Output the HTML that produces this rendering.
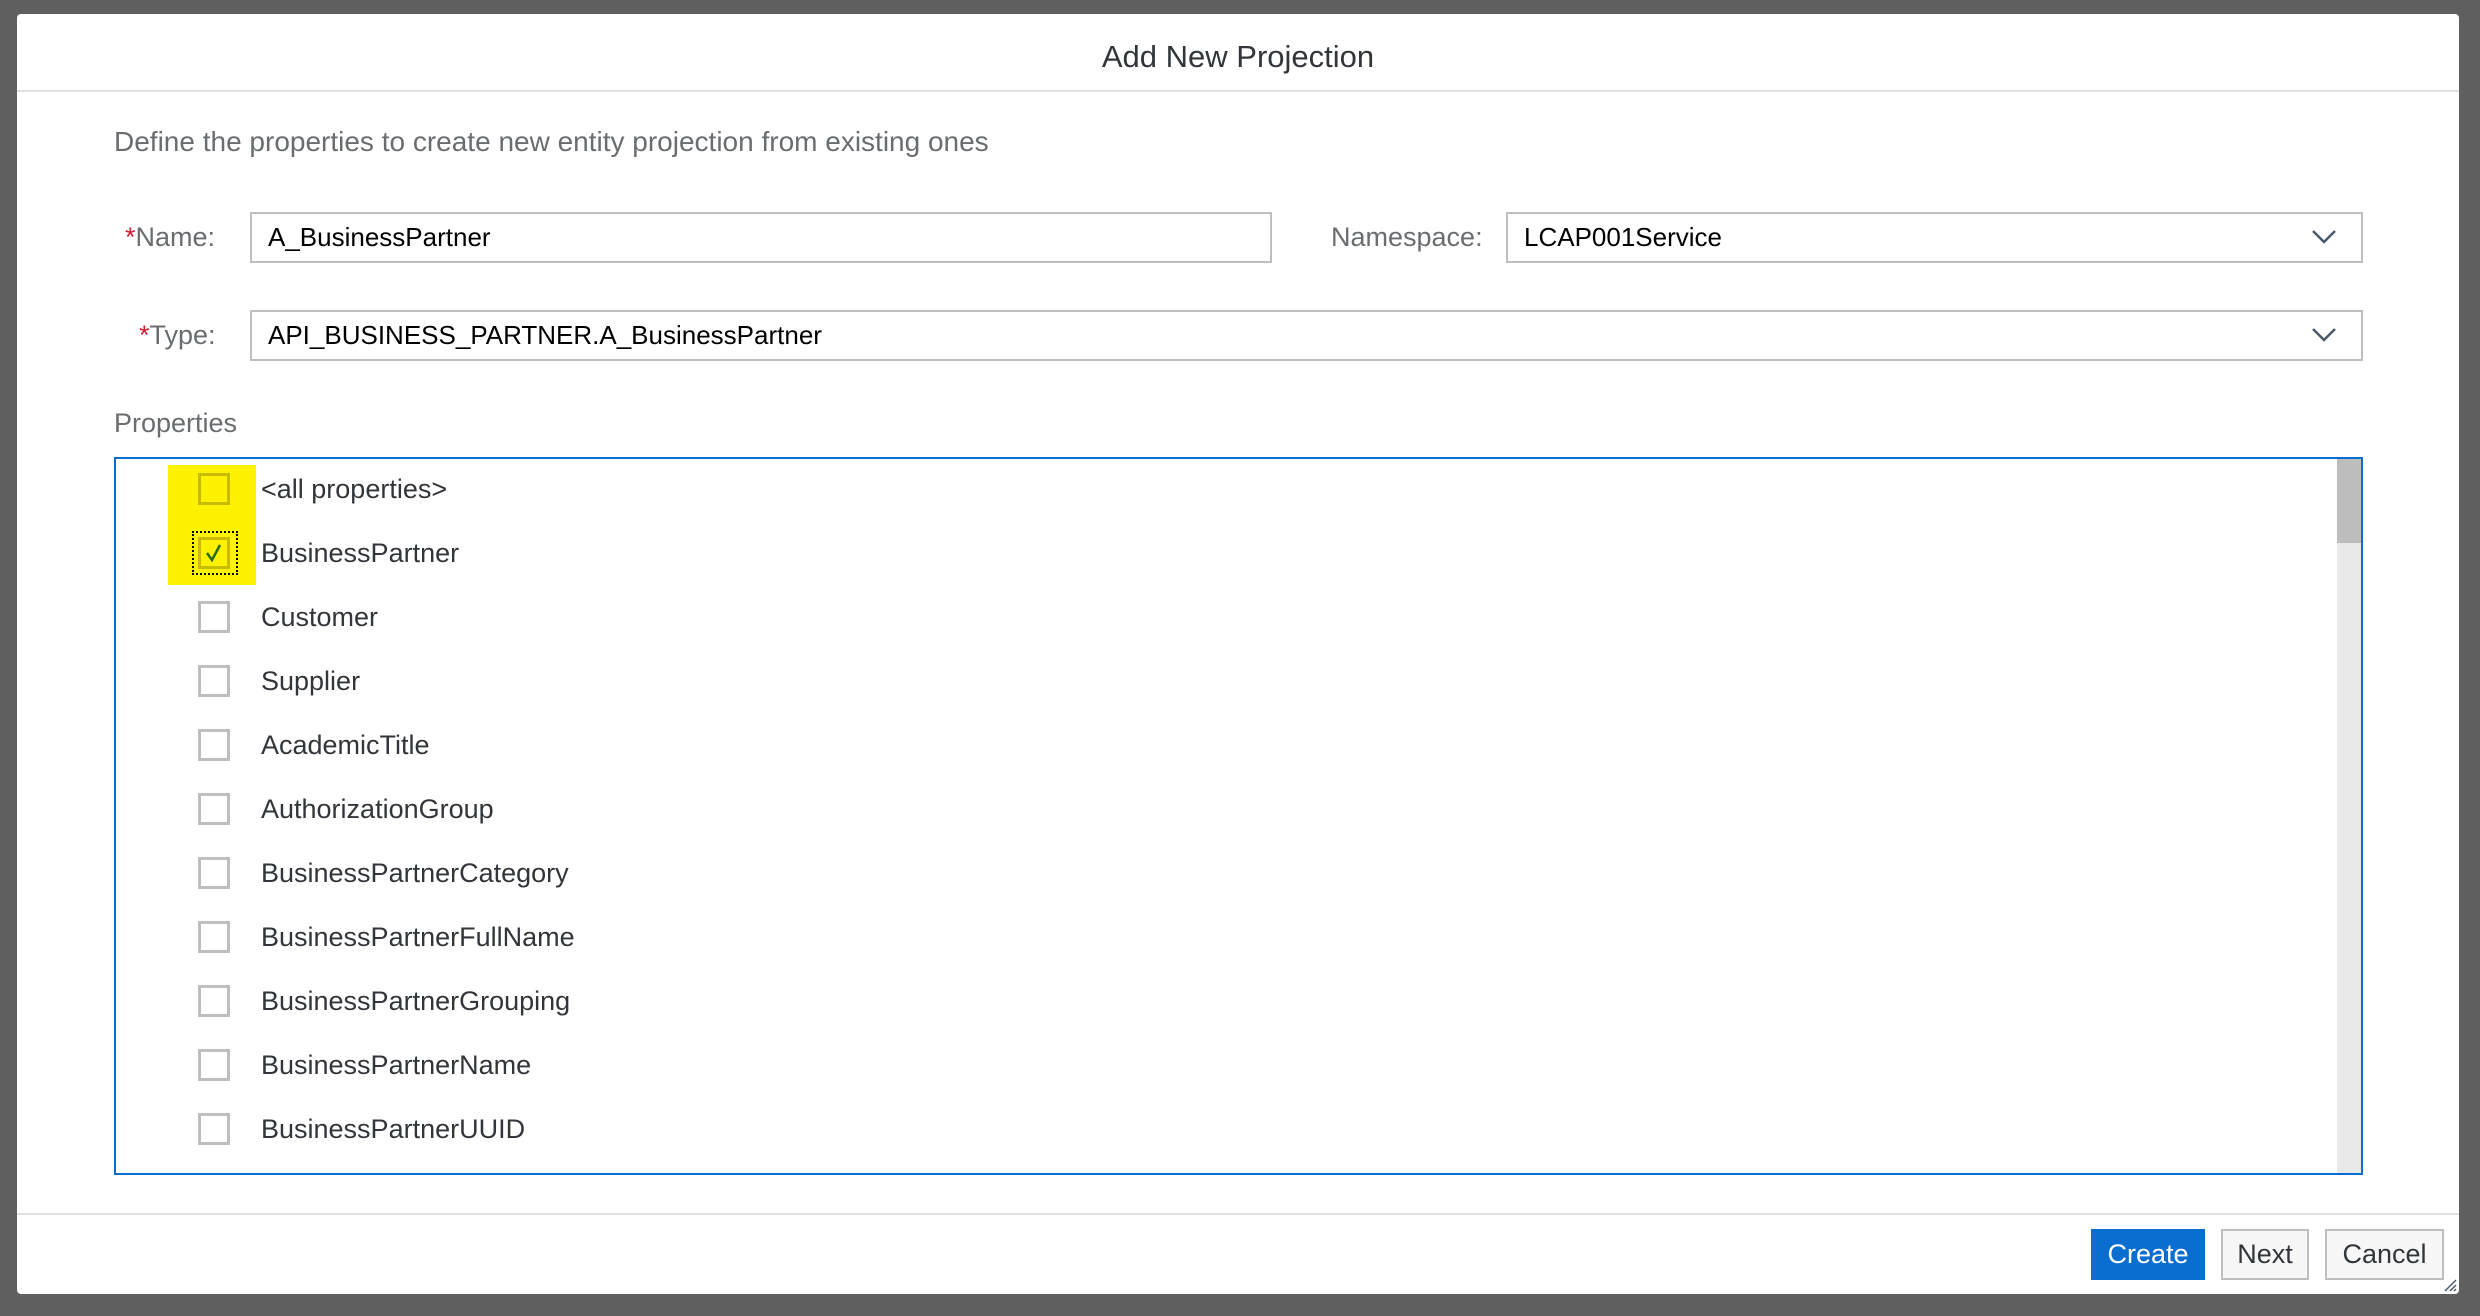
<!DOCTYPE html>
<html><head><meta charset="utf-8"><style>
*{box-sizing:border-box;margin:0;padding:0}
body{width:2480px;height:1316px;background:#5f5f5f;position:relative;overflow:hidden;font-family:"Liberation Sans",sans-serif;color:#32363a}
.dlg{position:absolute;left:17px;top:14px;width:2442px;height:1280px;background:#fff;border-radius:4px}
.abs{position:absolute}
.hdr{left:0;top:0;width:100%;height:78px;border-bottom:2px solid #e0e0e0;text-align:center;font-size:31px;line-height:86px;color:#32363a}
.lbl{font-size:27px;color:#6a6d70;white-space:nowrap}
.star{color:#d32030}
.inp{border:2px solid #bfbfbf;background:#fff;font-size:26px;color:#000;padding-left:16px;line-height:47px;white-space:nowrap}
.chev{position:absolute;right:24px;top:12px}
.list{left:97px;top:443px;width:2249px;height:718px;border:2px solid #0a6ed1}
.sb{right:0;top:0;width:24px;height:714px;background:#e8e8e8}
.thumb{right:0;top:0;width:24px;height:84px;background:#bdbdbd}
.row{left:0;height:64px;width:2000px}
.cb{position:absolute;left:82px;top:14px;width:32px;height:32px;border:3px solid #bfbfbf;background:#fff}
.rt{position:absolute;left:145px;top:15px;font-size:27px;color:#32363a;white-space:nowrap}
.ftr{left:0;top:1199px;width:100%;height:2px;background:#e0e0e0}
.btn{top:1215px;height:51px;font-size:27px;line-height:47px;text-align:center;border:2px solid #bfbfbf;background:#f7f7f7;color:#32363a}
</style></head><body>
<div class="dlg">
 <div class="abs hdr">Add New Projection</div>
 <div class="abs lbl" style="left:97px;top:112px;font-size:28px">Define the properties to create new entity projection from existing ones</div>

 <div class="abs lbl" style="left:108px;top:208px"><span class="star">*</span>Name:</div>
 <div class="abs inp" style="left:233px;top:198px;width:1022px;height:51px">A_BusinessPartner</div>

 <div class="abs lbl" style="left:1314px;top:208px">Namespace:</div>
 <div class="abs inp" style="left:1489px;top:198px;width:857px;height:51px">LCAP001Service
  <svg class="chev" width="26" height="22" viewBox="0 0 26 22"><path d="M2 5 L13 16 L24 5" fill="none" stroke="#4a5a6a" stroke-width="2.5"/></svg></div>

 <div class="abs lbl" style="left:122px;top:306px"><span class="star">*</span>Type:</div>
 <div class="abs inp" style="left:233px;top:296px;width:2113px;height:51px">API_BUSINESS_PARTNER.A_BusinessPartner
  <svg class="chev" width="26" height="22" viewBox="0 0 26 22"><path d="M2 5 L13 16 L24 5" fill="none" stroke="#4a5a6a" stroke-width="2.5"/></svg></div>

 <div class="abs lbl" style="left:97px;top:394px;font-size:27px">Properties</div>

 <div class="abs list">
  <div class="abs sb"></div><div class="abs thumb"></div>
  <div class="abs" style="left:52px;top:6px;width:88px;height:120px;background:#fff200"></div>
  <div class="abs row" style="top:0"><div class="cb" style="background:#fff200;border-color:#c8bc00"></div><div class="rt">&lt;all properties&gt;</div></div>
  <div class="abs row" style="top:64px"><div class="abs" style="left:76px;top:8px;width:46px;height:44px;border:2px dotted #000"></div><div class="cb" style="background:#fff200;border-color:#c8bc00"><svg width="26" height="26" viewBox="0 0 26 26" style="position:absolute;left:0;top:0"><path d="M6 13 L11 20 L19 5" fill="none" stroke="#2b6a1a" stroke-width="2.5"/></svg></div><div class="rt">BusinessPartner</div></div>
  <div class="abs row" style="top:128px"><div class="cb"></div><div class="rt">Customer</div></div>
  <div class="abs row" style="top:192px"><div class="cb"></div><div class="rt">Supplier</div></div>
  <div class="abs row" style="top:256px"><div class="cb"></div><div class="rt">AcademicTitle</div></div>
  <div class="abs row" style="top:320px"><div class="cb"></div><div class="rt">AuthorizationGroup</div></div>
  <div class="abs row" style="top:384px"><div class="cb"></div><div class="rt">BusinessPartnerCategory</div></div>
  <div class="abs row" style="top:448px"><div class="cb"></div><div class="rt">BusinessPartnerFullName</div></div>
  <div class="abs row" style="top:512px"><div class="cb"></div><div class="rt">BusinessPartnerGrouping</div></div>
  <div class="abs row" style="top:576px"><div class="cb"></div><div class="rt">BusinessPartnerName</div></div>
  <div class="abs row" style="top:640px"><div class="cb"></div><div class="rt">BusinessPartnerUUID</div></div>
 </div>

 <div class="abs ftr"></div>
 <div class="abs btn" style="left:2074px;width:114px;background:#0a6ed1;border-color:#0a6ed1;color:#fff">Create</div>
 <div class="abs btn" style="left:2204px;width:88px">Next</div>
 <div class="abs btn" style="left:2308px;width:119px">Cancel</div>
 <svg class="abs" style="right:2px;bottom:2px" width="14" height="14" viewBox="0 0 14 14"><path d="M2 13 L13 2 M7 13 L13 7 M11 13 L13 11" stroke="#4a5a6a" stroke-width="1.5"/></svg>
</div>
</body></html>
